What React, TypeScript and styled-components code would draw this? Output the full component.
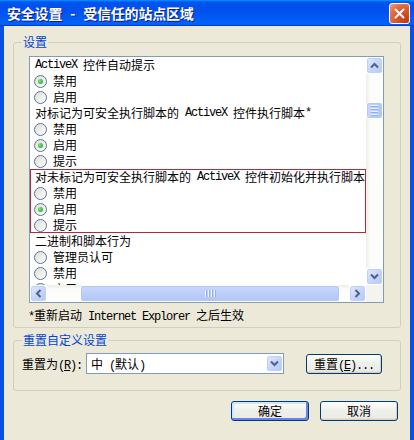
import React from 'react';
import styled, { createGlobalStyle } from 'styled-components';

const GlobalStyle = createGlobalStyle`
  html, body {
    margin: 0;
    padding: 0;
    background: #ECE9D8;
  }
  body {
    font-family: "Noto Sans CJK SC", "Liberation Sans", sans-serif;
    font-size: 12px;
    color: #000;
  }
`;

const Window = styled.div`
  width: 414px;
  height: 440px;
  display: flex;
  flex-direction: column;
  overflow: hidden;
`;

const TitleBar = styled.div`
  height: 26px;
  flex: none;
  display: flex;
  align-items: center;
  justify-content: space-between;
  padding: 0 4px 0 7px;
  background: linear-gradient(
    180deg,
    #0997ff,
    #0053ee 8%,
    #0050ee 40%,
    #0062f8 88%,
    #0062f8 93%,
    #005bff 95%,
    #003dd7 96%,
    #003dd7
  );
`;

const Title = styled.span`
  color: #fff;
  font-weight: bold;
  font-size: 14px;
  line-height: 26px;
  letter-spacing: -0.2px;
  white-space: nowrap;
  text-shadow: 1px 1px #0f1a8a;
`;

const Sep = styled.span`
  margin: 0 8px;
`;

const CloseButton = styled.div`
  width: 21px;
  height: 21px;
  box-sizing: border-box;
  border: 1px solid #fff;
  border-radius: 3px;
  background: radial-gradient(circle at 85% 85%, #c23b10 0%, #d9582a 45%, #e27048 70%, #eda184 100%);
  display: flex;
  align-items: center;
  justify-content: center;
`;

const Body = styled.div`
  flex: 1;
  background: #ECE9D8;
  border-left: 4px solid #0a50e3;
  border-right: 4px solid #0a50e3;
  padding: 0 9px;
  display: flex;
  flex-direction: column;
`;

const Fieldset = styled.fieldset<{ $top: number; $bottom: number }>`
  margin: ${p => p.$top}px 0 0;
  padding: 0 8px ${p => p.$bottom}px;
  border: 1px solid #D0D0BF;
  border-radius: 3px;
  min-width: 0;
`;

const Legend = styled.legend`
  padding: 0 1px;
  line-height: 14px;
  color: #0046D5;
`;

const Latin = styled.span`
  font-family: "Liberation Mono", monospace;
  letter-spacing: -1.2px;
  white-space: pre;
`;

const Key = styled.span`
  text-decoration: underline;
`;

const ListBox = styled.div`
  width: 355px;
  height: 247px;
  box-sizing: border-box;
  margin: 7px 0 0 7px;
  border: 1px solid #7F9DB9;
  background: #fff;
  display: grid;
  grid-template-columns: 1fr 17px;
  grid-template-rows: 1fr 17px;
  overflow: hidden;
`;

const Content = styled.div`
  overflow: hidden;
  white-space: nowrap;
`;

const Row = styled.div<{ $radio?: boolean }>`
  height: 16px;
  display: flex;
  align-items: center;
  padding-left: ${p => (p.$radio ? 4 : 5)}px;
  line-height: 16px;
`;

const Highlight = styled.div`
  outline: 1px solid #b02c3c;
  outline-offset: -1px;
`;

const RadioCircle = styled.span<{ $on?: boolean }>`
  width: 13px;
  height: 13px;
  box-sizing: border-box;
  flex: none;
  border-radius: 50%;
  border: 1px solid #5b7697;
  background: linear-gradient(135deg, #dcdcd7, #ffffff);
  display: inline-flex;
  align-items: center;
  justify-content: center;
  margin-right: 6px;

  &::after {
    content: '';
    width: 5px;
    height: 5px;
    border-radius: 50%;
    background: radial-gradient(circle at 35% 35%, #7ade75, #21a121);
    display: ${p => (p.$on ? 'block' : 'none')};
  }
`;

const VScroll = styled.div`
  display: flex;
  flex-direction: column;
`;

const HScroll = styled.div`
  display: flex;
`;

const Track = styled.div<{ $vertical?: boolean }>`
  flex: 1;
  display: flex;
  flex-direction: ${p => (p.$vertical ? 'column' : 'row')};
  background: ${p =>
    p.$vertical
      ? 'linear-gradient(90deg, #eeede5, #fcfcfa 25%, #fdfdfb)'
      : 'linear-gradient(180deg, #eeede5, #fcfcfa 25%, #fdfdfb)'};
`;

const Thumb = styled.div<{ $vertical?: boolean; $offset: number; $size: number }>`
  box-sizing: border-box;
  ${p =>
    p.$vertical
      ? `margin-top: ${p.$offset}px; height: ${p.$size}px;`
      : `margin-left: ${p.$offset}px; width: ${p.$size}px;`}
  border: 1px solid #fff;
  border-radius: 3px;
  background: ${p =>
    p.$vertical
      ? 'linear-gradient(90deg, #c9d8fc, #bacdf8 60%, #b1c6f6)'
      : 'linear-gradient(180deg, #c9d8fc, #bacdf8 60%, #b1c6f6)'};
  box-shadow: inset 0 0 0 1px #b4c8f6;
  display: flex;
  flex-direction: ${p => (p.$vertical ? 'column' : 'row')};
  align-items: center;
  justify-content: center;
  gap: 1px;
`;

const Grip = styled.span<{ $vertical?: boolean }>`
  ${p => (p.$vertical ? 'width: 7px; height: 1px;' : 'width: 1px; height: 7px;')}
  background: #eef3fe;
  box-shadow: ${p => (p.$vertical ? '0 1px #8cb0f8' : '1px 0 #8cb0f8')};
  margin: ${p => (p.$vertical ? '0 0 1px' : '0 1px 0 0')};
`;

const ArrowButton = styled.div`
  width: 17px;
  height: 17px;
  flex: none;
  box-sizing: border-box;
  border: 1px solid #fff;
  border-radius: 3px;
  background: linear-gradient(135deg, #e2eafe 0%, #c6d6fc 50%, #b3c7f5 100%);
  box-shadow: inset 0 0 0 1px #bdd0f9;
  display: flex;
  align-items: center;
  justify-content: center;
`;

const Corner = styled.div`
  background: #f4f3ee;
`;

const Note = styled.div`
  margin: 5px 0 0 6px;
  line-height: 14px;
  white-space: nowrap;
`;

const ResetRow = styled.div`
  display: flex;
  align-items: center;
  margin-top: 6px;
  white-space: nowrap;
`;

const Combo = styled.div`
  width: 198px;
  height: 21px;
  box-sizing: border-box;
  margin-left: 4px;
  border: 1px solid #7F9DB9;
  background: #fff;
  display: flex;
  align-items: center;
  justify-content: space-between;
  padding-left: 4px;
`;

const Button = styled.button<{ $width: number; $default?: boolean }>`
  width: ${p => p.$width}px;
  height: 20px;
  box-sizing: border-box;
  padding: 0;
  border: 1px solid #003c74;
  border-radius: 3px;
  background: linear-gradient(180deg, #ffffff, #f0f0ea 45%, #ecebe6 86%, #d6d0c5);
  box-shadow: ${p =>
    p.$default
      ? 'inset -2px -2px #6982ee, inset 2px 2px #cee7ff'
      : 'inset -1px -1px #d6d0c5'};
  font-family: "Noto Sans CJK SC", "Liberation Sans", sans-serif;
  font-size: 12px;
  line-height: 18px;
  color: #000;
  white-space: nowrap;
`;

const ResetButton = styled(Button)`
  margin-left: 22px;
`;

const ButtonRow = styled.div`
  display: flex;
  justify-content: flex-end;
  gap: 11px;
  margin: 10px 3px 0 0;
`;

type Dir = 'up' | 'down' | 'left' | 'right';

const Chevron = ({ dir }: { dir: Dir }) => {
  const rot = { up: 0, right: 90, down: 180, left: 270 }[dir];
  return (
    <svg width="9" height="9" viewBox="0 0 9 9" style={{ transform: `rotate(${rot}deg)` }}>
      <polyline points="1,6.5 4.5,3 8,6.5" fill="none" stroke="#4d6185" strokeWidth="2" />
    </svg>
  );
};

const Radio = ({ on, children }: { on?: boolean; children: React.ReactNode }) => (
  <Row $radio>
    <RadioCircle $on={on} />
    {children}
  </Row>
);

const grips = [0, 1, 2, 3];

export default function App() {
  return (
    <>
      <GlobalStyle />
      <Window>
        <TitleBar>
          <Title>
            安全设置<Sep>-</Sep>受信任的站点区域
          </Title>
          <CloseButton>
            <svg width="11" height="11" viewBox="0 0 11 11">
              <path d="M1.5 1.5 L9.5 9.5 M9.5 1.5 L1.5 9.5" stroke="#fff" strokeWidth="2" strokeLinecap="round" />
            </svg>
          </CloseButton>
        </TitleBar>
        <Body>
          <Fieldset $top={9} $bottom={3}>
            <Legend>设置</Legend>
            <ListBox>
              <Content>
                <Row>
                  <Latin>ActiveX </Latin>控件自动提示
                </Row>
                <Radio on>禁用</Radio>
                <Radio>启用</Radio>
                <Row>
                  对标记为可安全执行脚本的<Latin> ActiveX </Latin>控件执行脚本<Latin>*</Latin>
                </Row>
                <Radio>禁用</Radio>
                <Radio on>启用</Radio>
                <Radio>提示</Radio>
                <Highlight>
                  <Row>
                    对未标记为可安全执行脚本的<Latin> ActiveX </Latin>控件初始化并执行脚本
                  </Row>
                  <Radio>禁用</Radio>
                  <Radio on>启用</Radio>
                  <Radio>提示</Radio>
                </Highlight>
                <Row>二进制和脚本行为</Row>
                <Radio>管理员认可</Radio>
                <Radio>禁用</Radio>
                <Radio>启用</Radio>
              </Content>
              <VScroll>
                <ArrowButton>
                  <Chevron dir="up" />
                </ArrowButton>
                <Track $vertical>
                  <Thumb $vertical $offset={28} $size={17}>
                    {grips.map(g => (
                      <Grip key={g} $vertical />
                    ))}
                  </Thumb>
                </Track>
                <ArrowButton>
                  <Chevron dir="down" />
                </ArrowButton>
              </VScroll>
              <HScroll>
                <ArrowButton>
                  <Chevron dir="left" />
                </ArrowButton>
                <Track>
                  <Thumb $offset={33} $size={260}>
                    {grips.map(g => (
                      <Grip key={g} />
                    ))}
                  </Thumb>
                </Track>
                <ArrowButton>
                  <Chevron dir="right" />
                </ArrowButton>
              </HScroll>
              <Corner />
            </ListBox>
            <Note>
              <Latin>*</Latin>重新启动<Latin> Internet Explorer </Latin>之后生效
            </Note>
          </Fieldset>
          <Fieldset $top={5} $bottom={16}>
            <Legend>重置自定义设置</Legend>
            <ResetRow>
              <span>
                重置为<Latin>(<Key>R</Key>):</Latin>
              </span>
              <Combo>
                <span>
                  中<Latin> (</Latin>默认<Latin>)</Latin>
                </span>
                <ArrowButton>
                  <Chevron dir="down" />
                </ArrowButton>
              </Combo>
              <ResetButton $width={76}>
                重置<Latin>(<Key>E</Key>)...</Latin>
              </ResetButton>
            </ResetRow>
          </Fieldset>
          <ButtonRow>
            <Button $width={78} $default>
              确定
            </Button>
            <Button $width={78}>取消</Button>
          </ButtonRow>
        </Body>
      </Window>
    </>
  );
}
